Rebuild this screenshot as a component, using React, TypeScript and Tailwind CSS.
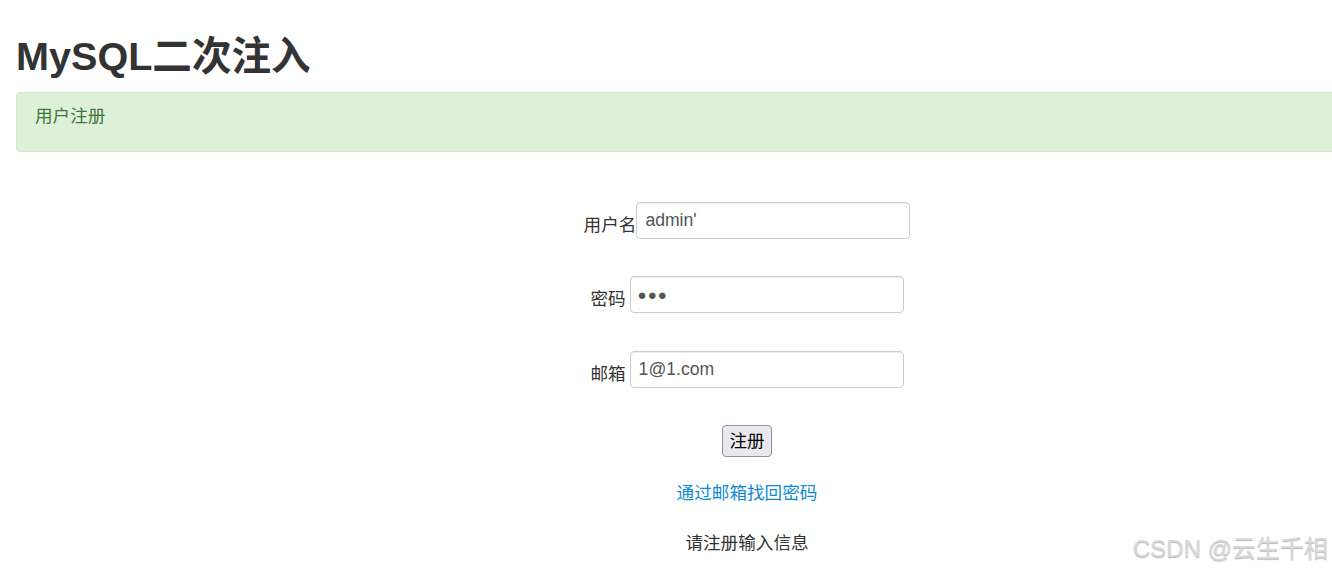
const font = { fontFamily: '"Liberation Sans", "Noto Sans CJK SC", sans-serif' };

function Field({ label, value, gap, dots }: { label: string; value: string; gap: boolean; dots?: boolean }) {
  return (
    <div className={`flex items-center justify-center ${gap ? 'gap-1' : 'gap-0'}`}>
      <label className="pt-[9px] text-[17.6px] leading-[24px] text-[#333]">{label}</label>
      <input
        type="text"
        value={value}
        readOnly
        className={`h-[37px] w-[274px] rounded-[4px] border border-[#ccc] bg-white pr-3 text-[#555] shadow-[inset_0_1px_1px_rgba(0,0,0,0.075)] outline-none ${
          dots ? 'pl-[7px] text-[15px] tracking-[1px]' : 'pl-[8px] text-[17.6px]'
        }`}
      />
    </div>
  );
}

export default function App() {
  return (
    <div className="relative h-[571px] w-[1332px] overflow-hidden bg-white" style={font}>
      <div className="ml-4 w-[1462px]">
        {/* Title */}
        <h1 className="mt-[34px] h-[44px] text-[39.6px] font-bold leading-[44px] text-[#333]">
          MySQL二次注入
        </h1>

        {/* Alert */}
        <div className="mt-[14px] h-[60px] rounded-[4px] border border-[#d6e9c6] bg-[#dff0d8] pl-[18px] pt-[13px] text-[17.6px] leading-[20px] text-[#3c763d]">
          用户注册
        </div>

        {/* Form */}
        <form className="mt-[50px] flex flex-col items-center" onSubmit={(e) => e.preventDefault()}>
          <div className="w-full">
            <Field label="用户名" value="admin'" gap={false} />
          </div>
          <div className="mt-[37px] w-full">
            <Field label="密码" value="●●●" gap={true} dots />
          </div>
          <div className="mt-[38px] w-full">
            <Field label="邮箱" value="1@1.com" gap={true} />
          </div>

          <button
            type="submit"
            className="mt-[37px] h-[32px] rounded-[4px] border border-[#8f8f9d] bg-[#e9e9ed] px-[6px] text-[17.6px] leading-[20px] text-black"
          >
            注册
          </button>

          <a href="#" className="mt-[26px] text-[17.6px] leading-[20px] text-[#0f8ad3]">
            通过邮箱找回密码
          </a>

          <p className="mt-[30px] text-[17.6px] leading-[20px] text-[#333]">请注册输入信息</p>
        </form>
      </div>

      {/* Watermark */}
      <div className="absolute bottom-[8px] right-[4px] text-[24px] leading-[28px] text-[#dadada] [text-shadow:0_1px_1px_rgba(0,0,0,0.3)]">
        CSDN @云生千相
      </div>
    </div>
  );
}
